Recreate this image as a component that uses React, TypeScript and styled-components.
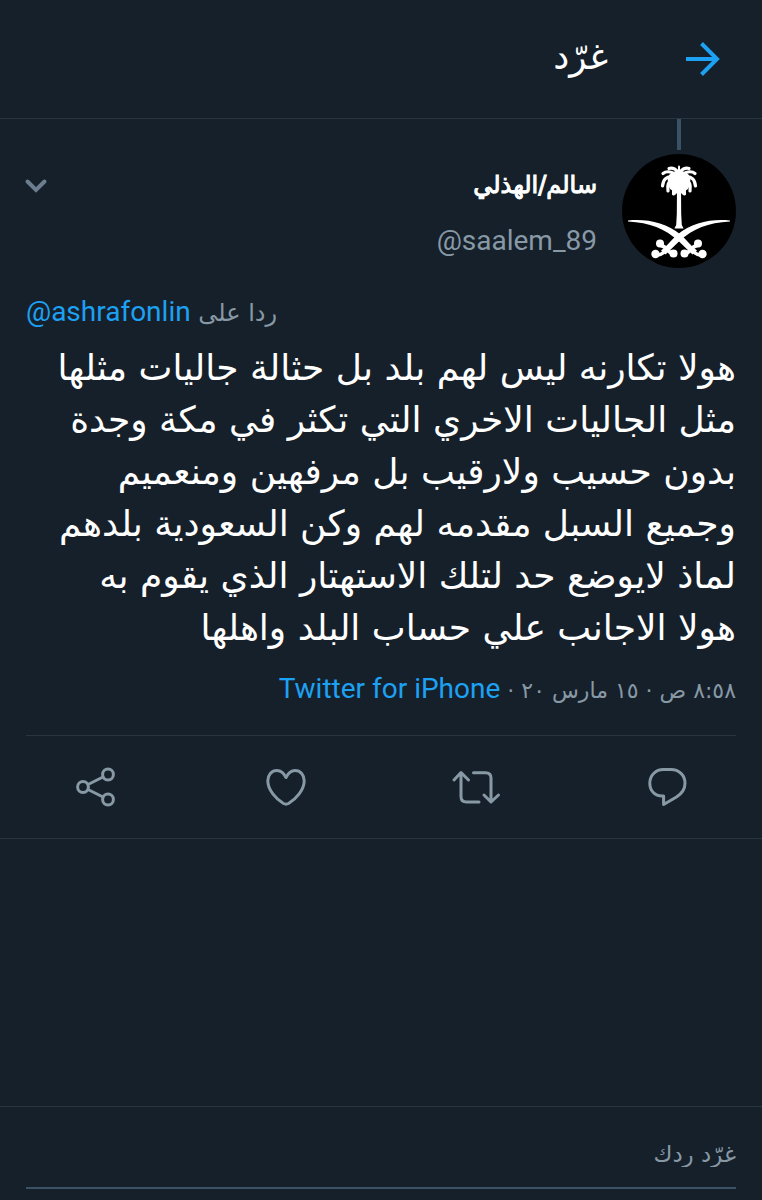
import React from "react";
import styled, { createGlobalStyle } from "styled-components";

const color = {
  background: "#16202a",
  divider: "#29353f",
  text: "#ffffff",
  muted: "#8899a6",
  chevron: "#6b7d8e",
  link: "#1da1f2",
  thread: "#3b5266",
};

const arabicFont = `"DejaVu Sans", sans-serif`;

const GlobalStyle = createGlobalStyle`
  * { box-sizing: border-box; }
  body {
    margin: 0;
    background: ${color.background};
    color: ${color.text};
    font-family: Roboto, ${arabicFont};
  }
  button { padding: 0; border: 0; background: none; color: inherit; cursor: pointer; }
  a { color: ${color.link}; text-decoration: none; }
  svg { display: block; overflow: visible; }
`;

const Screen = styled.div`
  display: flex;
  flex-direction: column;
  min-height: 100vh;
`;

const TopBar = styled.header`
  display: flex;
  align-items: center;
  gap: 76px;
  height: 119px;
  padding: 0 42px;
  border-bottom: 1px solid ${color.divider};
`;

const BackButton = styled.button`
  color: ${color.link};
`;

const Title = styled.h1`
  margin: 0;
  padding-bottom: 4px;
  font-family: ${arabicFont};
  font-size: 36px;
  line-height: 48px;
  font-weight: 400;
`;

const Tweet = styled.article`
  border-bottom: 1px solid ${color.divider};
`;

const TweetContent = styled.div`
  padding: 0 26px;
`;

const Author = styled.div`
  display: flex;
  gap: 25px;
`;

const AvatarColumn = styled.div`
  display: flex;
  flex-direction: column;
  align-items: center;
  gap: 4px;
`;

const ThreadLine = styled.div`
  width: 4px;
  height: 31px;
  background: ${color.thread};
`;

const Names = styled.div`
  flex: 1;
  padding-top: 40px;
`;

const DisplayName = styled.div`
  font-family: ${arabicFont};
  font-size: 24px;
  line-height: 52px;
  -webkit-text-stroke: 1px currentColor;
`;

const Handle = styled.div`
  font-size: 28px;
  line-height: 60px;
  color: ${color.muted};
`;

const MenuButton = styled.button`
  align-self: flex-start;
  margin-top: 56px;
`;

const ReplyingTo = styled.div`
  margin-top: 19px;
  font-size: 28px;
  line-height: 44px;
  text-align: left;
  color: ${color.muted};
`;

const ReplyLabel = styled.span`
  font-family: ${arabicFont};
  font-size: 24px;
`;

const Timestamp = styled.span`
  font-family: ${arabicFont};
  font-size: 22px;
`;

const Body = styled.p`
  margin: 7px 0 0;
  font-family: ${arabicFont};
  font-size: 36px;
  line-height: 52px;
  white-space: nowrap;
`;

const Line = styled.span`
  display: block;
`;

const Meta = styled.div`
  margin-top: 13px;
  padding-bottom: 22px;
  font-size: 28px;
  line-height: 44px;
  color: ${color.muted};
  border-bottom: 1px solid ${color.divider};
`;

const Actions = styled.div`
  display: grid;
  grid-template-columns: repeat(4, 1fr);
  justify-items: center;
  padding: 27px 0;
  color: ${color.muted};
`;

const Composer = styled.form`
  margin-top: auto;
  padding: 19px 26px 11px;
  border-top: 1px solid ${color.divider};
`;

const ReplyInput = styled.input`
  display: block;
  width: 100%;
  height: 63px;
  padding: 0 0 6px;
  border: 0;
  border-bottom: 2px solid ${color.thread};
  outline: 0;
  background: none;
  color: ${color.text};
  font-family: ${arabicFont};
  font-size: 23px;
  line-height: 40px;
  &::placeholder { color: ${color.muted}; opacity: 1; }
`;

const BackArrow = () => (
  <svg width="36" height="36" viewBox="0 0 36 36" fill="none" stroke="currentColor" strokeWidth="4">
    <path d="M2 18H33M17.500 2.500L33 18L17.500 33.500" />
  </svg>
);

const Chevron = () => (
  <svg width="20" height="20" viewBox="0 0 20 20" fill="none" stroke={color.chevron} strokeWidth="4" strokeLinecap="round">
    <path d="M1.500 6.500L10 15L18.500 6.500" />
  </svg>
);

const ActionIcon = ({ children }: { children: React.ReactNode }) => (
  <svg width="48" height="48" viewBox="0 0 48 48" fill="none" stroke="currentColor" strokeWidth="3" strokeLinecap="round" strokeLinejoin="round">
    {children}
  </svg>
);

const Emblem = () => (
  <svg width="114" height="114" viewBox="0 0 114 114" fill="#fff">
    <circle cx="57" cy="57" r="57" fill="#000" />
    <path d="M55 32H59L59.200 60L59.800 71L61.600 74.500H52.400L54.200 71L54.800 60Z" />
    <path d="M47 21Q57 12 67 21Q70 28 66 35L63 37L61 41L57 37L53 41L51 37L48 35Q44 28 47 21Z" />
    <g fill="none" stroke="#fff" strokeWidth="3.200" strokeLinecap="round">
      <path d="M57 20V12.500" strokeWidth="2" />
      <path d="M56 18C53 14.500 50 13.500 47 14.500" />
      <path d="M58 18C61 14.500 64 13.500 67 14.500" />
      <path d="M53 20C49 17.500 44 17 41 19.500" />
      <path d="M61 20C65 17.500 70 17 73 19.500" />
      <path d="M51 23C44 22 41 26 40.500 32" />
      <path d="M63 23C70 22 73 26 73.500 32" />
      <path d="M51 26C47 27 45 31 46 37" />
      <path d="M63 26C67 27 69 31 68 37" />
      <path d="M53 28C51 31 52 35 51.500 40" />
      <path d="M61 28C63 31 62 35 62.500 40" />
    </g>
    <path d="M6 66.500C24 64.500 44 68.500 58.500 80.500C65 86 69 92 75 96.500L70.500 100.500L56 86.500C43 75 28 68.500 6 67.500Z" />
    <path d="M108 66.500C90 64.500 70 68.500 55.500 80.500C49 86 45 92 39 96.500L43.500 100.500L58 86.500C71 75 86 68.500 108 67.500Z" />
    <g fill="none" stroke="#fff" strokeWidth="3.500" strokeLinecap="round">
      <path d="M38 91Q42 92.500 44 94Q47 98.500 51 100" />
      <path d="M76 91Q72 92.500 70 94Q67 98.500 63 100" />
      <path d="M34 101.500Q39 101.500 43 97" />
      <path d="M80 101.500Q75 101.500 71 97" />
    </g>
    <circle cx="38" cy="89.500" r="4" />
    <circle cx="76" cy="89.500" r="4" />
    <circle cx="33.500" cy="100" r="4.200" />
    <circle cx="80.500" cy="100" r="4.200" />
    <circle cx="51.500" cy="99.500" r="4" />
    <circle cx="62.500" cy="99.500" r="4" />
  </svg>
);

const lines = [
  "هولا تكارنه ليس لهم بلد بل حثالة جاليات مثلها",
  "مثل الجاليات الاخري التي تكثر في مكة وجدة",
  "بدون حسيب ولارقيب بل مرفهين ومنعميم",
  "وجميع السبل مقدمه لهم وكن السعودية بلدهم",
  "لماذ لايوضع حد لتلك الاستهتار الذي يقوم به",
  "هولا الاجانب علي حساب البلد واهلها",
];

export default function App() {
  return (
    <Screen dir="rtl" lang="ar">
      <GlobalStyle />
      <TopBar>
        <BackButton aria-label="رجوع"><BackArrow /></BackButton>
        <Title>غرّد</Title>
      </TopBar>
      <Tweet>
        <TweetContent>
          <Author>
            <AvatarColumn>
              <ThreadLine />
              <Emblem />
            </AvatarColumn>
            <Names>
              <DisplayName>سالم/الهذلي</DisplayName>
              <Handle><bdi dir="ltr">@saalem_89</bdi></Handle>
            </Names>
            <MenuButton aria-label="المزيد"><Chevron /></MenuButton>
          </Author>
          <ReplyingTo>
            <ReplyLabel>ردا على </ReplyLabel><a href="#user" dir="ltr"><bdi>@ashrafonlin</bdi></a>
          </ReplyingTo>
          <Body>
            {lines.map((line) => <Line key={line}>{line} </Line>)}
          </Body>
          <Meta>
            <Timestamp>٨:٥٨ ص · ١٥ مارس ٢٠ · </Timestamp>
            <a href="#source"><bdi>Twitter for iPhone</bdi></a>
          </Meta>
        </TweetContent>
        <Actions>
          <button aria-label="رد">
            <ActionIcon>
              <path d="M20.600 33H19C12 33 6.800 28 6.800 20.300C6.800 12.300 12.500 6.600 20.500 6.600H28C36 6.600 42 12.300 42 20.300C42 27 39 30.500 33.500 34L20.600 41.500Z" />
            </ActionIcon>
          </button>
          <button aria-label="إعادة تغريد">
            <ActionIcon>
              <path d="M2 17L9 9.500L16.500 17M9 10V33.500Q9 39 14.500 39H27M21.500 9.700H33.500Q39 9.700 39 15V39M32 32L39 39L46.500 32" />
            </ActionIcon>
          </button>
          <button aria-label="إعجاب">
            <ActionIcon>
              <path d="M24 14.500C21.500 9.500 18.500 7.500 15 7.500C9.500 7.500 5.800 12 5.800 17.800C5.800 27 14 36 21.500 40.500Q24 41.800 26.500 40.500C34 36 42.200 27 42.200 17.800C42.200 12 38.500 7.500 33 7.500C29.500 7.500 26.500 9.500 24 14.500Z" />
            </ActionIcon>
          </button>
          <button aria-label="مشاركة">
            <ActionIcon>
              <circle cx="12" cy="24" r="5.400" />
              <circle cx="37" cy="11.500" r="5.400" />
              <circle cx="37" cy="36.500" r="5.400" />
              <path d="M17 21.500L32 14M17 26.500L32 34" />
            </ActionIcon>
          </button>
        </Actions>
      </Tweet>
      <Composer>
        <ReplyInput type="text" placeholder="غرّد ردك" aria-label="غرّد ردك" />
      </Composer>
    </Screen>
  );
}
